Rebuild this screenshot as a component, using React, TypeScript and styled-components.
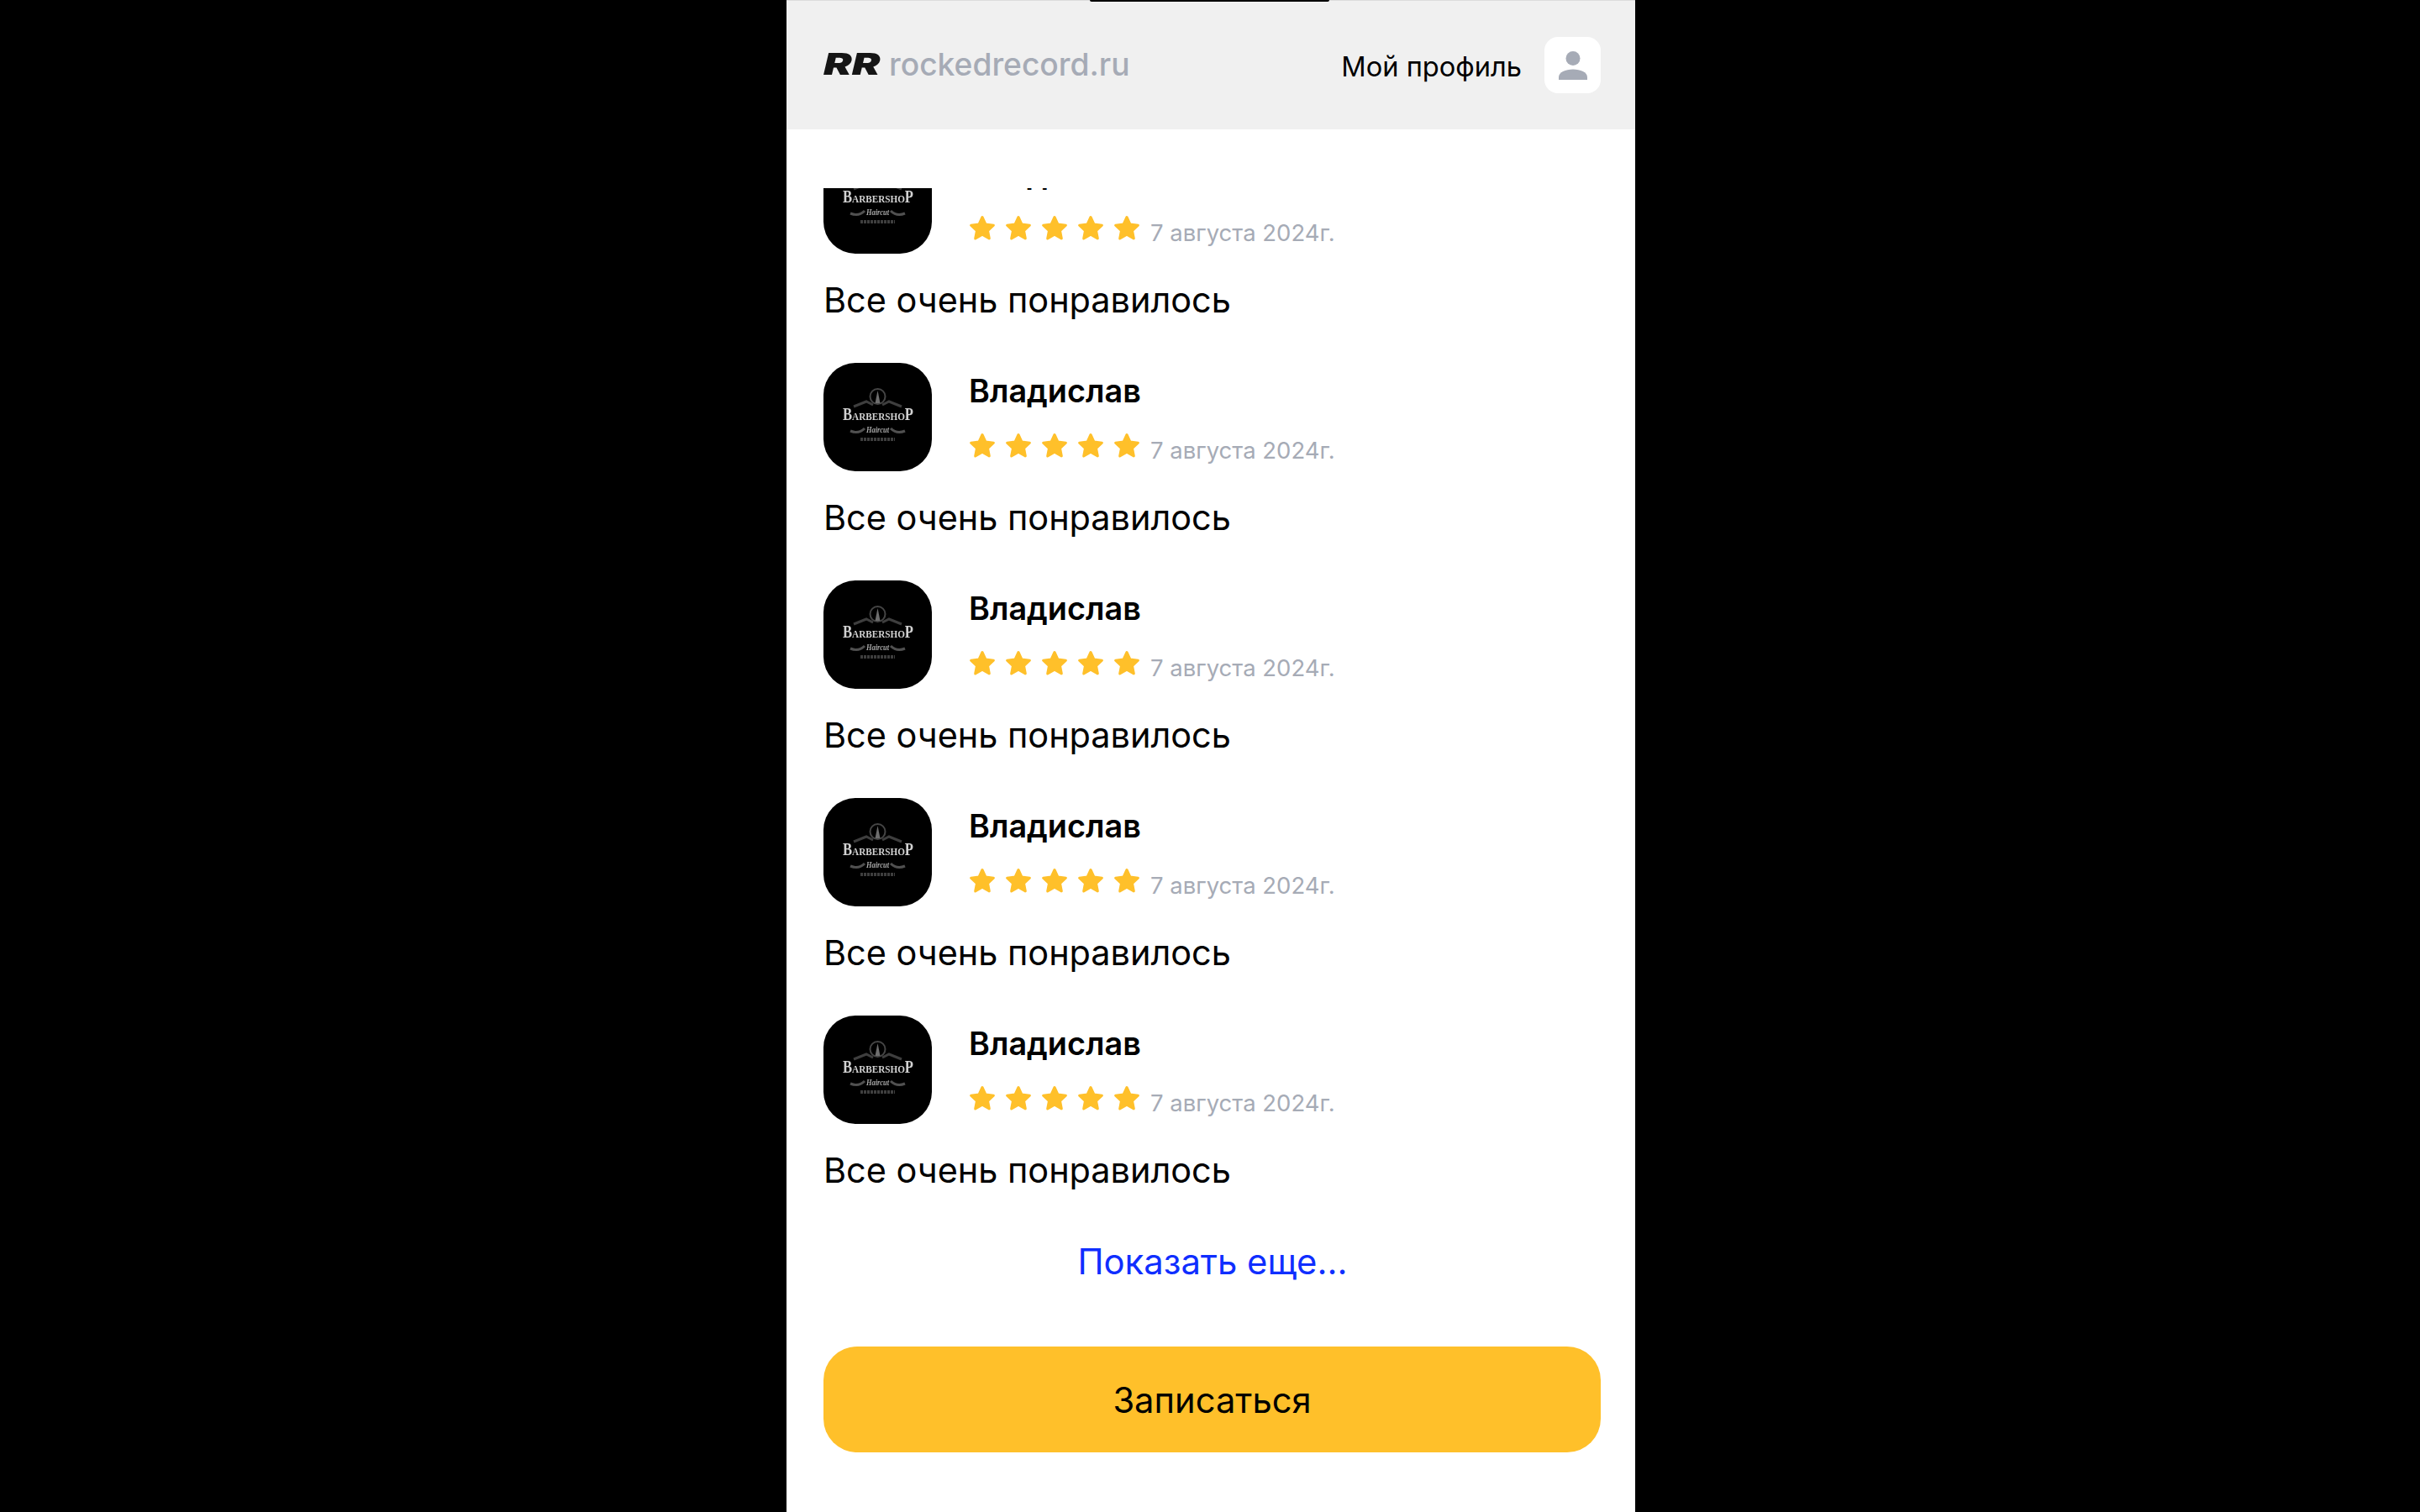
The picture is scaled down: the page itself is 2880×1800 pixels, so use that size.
import React from "react";
import styled, { createGlobalStyle } from "styled-components";

const Global = createGlobalStyle`
  html, body { margin: 0; padding: 0; background: #000; }
  * { box-sizing: border-box; }
  body { font-family: Inter, "Liberation Sans", sans-serif; }
`;

const Page = styled.div`
  width: 100%;
  height: 1800px;
  padding-left: 2px;
  background: #000;
  display: flex;
  justify-content: center;
  overflow: hidden;
`;

const Phone = styled.div`
  position: relative;
  width: 1010px;
  height: 1800px;
  background: #fff;
  display: flex;
  flex-direction: column;
`;

const Notch = styled.div`
  position: absolute;
  top: 0;
  left: 361px;
  width: 285px;
  height: 2px;
  background: #000;
  border-radius: 0 0 2px 2px;
`;

const Header = styled.header`
  flex: 0 0 154px;
  background: #f0f0f0;
  border-top: 1px solid #dcdcdc;
  padding: 0 41px 0 44px;
  display: flex;
  align-items: center;
  justify-content: space-between;
`;

const Brand = styled.div`
  display: flex;
  align-items: center;
  gap: 11px;
  margin-top: -2px;
`;

const BrandMark = styled.span`
  display: inline-block;
  width: 67px;
  font-style: italic;
  font-weight: 900;
  font-size: 36px;
  line-height: 1;
  color: #151515;
  transform: scaleX(1.4);
  transform-origin: left center;
`;

const BrandName = styled.span`
  font-weight: 500;
  font-size: 37.2px;
  line-height: 1;
  color: #a6abb6;
`;

const Profile = styled.div`
  display: flex;
  align-items: center;
  gap: 27px;
`;

const ProfileLabel = styled.span`
  font-size: 32.6px;
  font-weight: 400;
  color: #000;
  margin-top: 2px;
`;

const ProfileButton = styled.div`
  width: 67px;
  height: 67px;
  border-radius: 16px;
  background: #fff;
  display: flex;
  align-items: center;
  justify-content: center;
`;

const ReviewViewport = styled.main`
  margin-top: 70px;
  height: 1206px;
  overflow: hidden;
`;

const ReviewList = styled.div`
  margin-top: -51px;
  padding: 0 44px;
  display: flex;
  flex-direction: column;
  gap: 48px;
`;

const Review = styled.article`
  display: flex;
  flex-direction: column;
  gap: 29px;
`;

const ReviewHead = styled.div`
  display: flex;
  align-items: flex-start;
  gap: 44px;
`;

const Avatar = styled.div`
  flex: 0 0 129px;
  width: 129px;
  height: 129px;
  border-radius: 38px;
  background: #000;
  overflow: hidden;
`;

const ReviewMeta = styled.div`
  display: flex;
  flex-direction: column;
  padding-top: 11px;
  gap: 28px;
`;

const Name = styled.div`
  font-size: 37.8px;
  font-weight: 600;
  line-height: 44px;
  color: #000;
`;

const RatingRow = styled.div`
  display: flex;
  align-items: flex-start;
  gap: 12px;
`;

const Stars = styled.div`
  display: flex;
  gap: 11px;
`;

const ReviewDate = styled.span`
  font-size: 27.5px;
  line-height: 34px;
  color: #a6abb6;
  margin-top: 4px;
`;

const ReviewText = styled.p`
  margin: 0;
  font-size: 41.4px;
  line-height: 53px;
  color: #000;
`;

const ShowMore = styled.a`
  display: block;
  margin-top: 46px;
  padding-left: 4px;
  text-align: center;
  font-size: 41.8px;
  line-height: 53px;
  color: #0f2eff;
`;

const SubmitButton = styled.button`
  margin: 74px 41px 0 44px;
  height: 126px;
  padding: 2px 0 0;
  border: 0;
  border-radius: 40px;
  background: #ffc02a;
  color: #000;
  font-family: inherit;
  font-size: 41.7px;
`;

const StarIcon = () => (
  <svg width="32" height="31" viewBox="0 0 32 31">
    <path
      d="M16 2.5l4 8.6 9.4 1.1-6.9 6.4 1.8 9.3-8.3-4.6-8.3 4.6 1.8-9.3-6.9-6.4 9.4-1.1z"
      fill="#ffc02a"
      stroke="#ffc02a"
      strokeWidth="3"
      strokeLinejoin="round"
    />
  </svg>
);

const UserIcon = () => (
  <svg width="36" height="36" viewBox="0 0 36 36">
    <circle cx="18" cy="9.5" r="8.5" fill="#a6abb6" />
    <path d="M1 35v-3c0-6 8-9.5 17-9.5S35 26 35 32v3z" fill="#a6abb6" />
  </svg>
);

const LogoArt = styled.svg`
  display: block;
  filter: blur(0.6px);
`;

const BarberLogo = () => (
  <LogoArt width="129" height="129" viewBox="0 0 129 129">
    <circle cx="64.5" cy="40" r="9" fill="none" stroke="#454545" strokeWidth="2" />
    <path d="M64.5 33l3 15h-6z" fill="#6e6e6e" />
    <path d="M36 52l15-6 8 4M93 52l-15-6-8 4" stroke="#3e3e3e" strokeWidth="3" fill="none" />
    <text
      x="65"
      y="68"
      textAnchor="middle"
      textLength="84"
      lengthAdjust="spacingAndGlyphs"
      fontFamily="'Liberation Serif', serif"
      fontWeight="700"
      fontSize="13.5"
      fill="#d2d2d2"
    >
      <tspan fontSize="20">B</tspan>
      ARBERSHO
      <tspan fontSize="20">P</tspan>
    </text>
    <path d="M32 81c7 3 12 2 17-3M97 81c-7 3-12 2-17-3" stroke="#505050" strokeWidth="3" fill="none" />
    <text
      x="64.5"
      y="83"
      textAnchor="middle"
      textLength="27"
      lengthAdjust="spacingAndGlyphs"
      fontFamily="'Liberation Serif', serif"
      fontStyle="italic"
      fontWeight="700"
      fontSize="10"
      fill="#a8a8a8"
    >
      Haircut
    </text>
    <path d="M44 91h41" stroke="#3e3e3e" strokeWidth="4" strokeDasharray="3 1" />
  </LogoArt>
);

const reviews = [0, 1, 2, 3, 4];

export default function App() {
  return (
    <Page>
      <Global />
      <Phone>
        <Notch />
        <Header>
          <Brand>
            <BrandMark>RR</BrandMark>
            <BrandName>rockedrecord.ru</BrandName>
          </Brand>
          <Profile>
            <ProfileLabel>Мой профиль</ProfileLabel>
            <ProfileButton>
              <UserIcon />
            </ProfileButton>
          </Profile>
        </Header>
        <ReviewViewport>
          <ReviewList>
            {reviews.map((id) => (
              <Review key={id}>
                <ReviewHead>
                  <Avatar>
                    <BarberLogo />
                  </Avatar>
                  <ReviewMeta>
                    <Name>Владислав</Name>
                    <RatingRow>
                      <Stars>
                        {[0, 1, 2, 3, 4].map((s) => (
                          <StarIcon key={s} />
                        ))}
                      </Stars>
                      <ReviewDate>7 августа 2024г.</ReviewDate>
                    </RatingRow>
                  </ReviewMeta>
                </ReviewHead>
                <ReviewText>Все очень понравилось</ReviewText>
              </Review>
            ))}
          </ReviewList>
        </ReviewViewport>
        <ShowMore>Показать еще...</ShowMore>
        <SubmitButton>Записаться</SubmitButton>
      </Phone>
    </Page>
  );
}
